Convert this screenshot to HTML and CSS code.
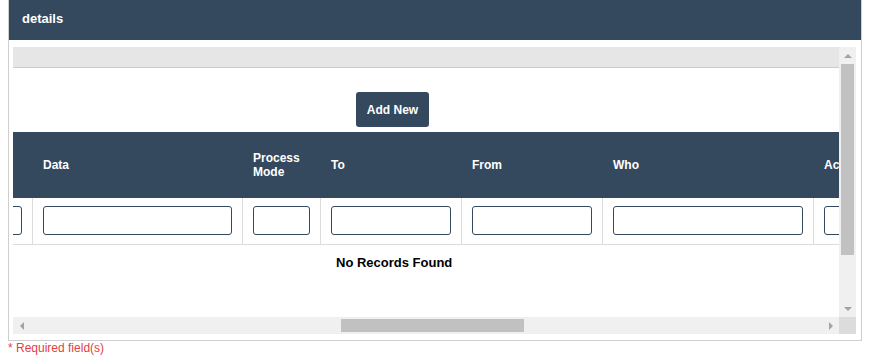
FILE: index.html
```html
<!DOCTYPE html>
<html lang="en">
<head>
    <meta charset="UTF-8">
    <title>details</title>
    <link rel="stylesheet" href="styles.css">
</head>
<body>

    <div class="panel">
        <div class="panel-head">details</div>
        <div class="panel-body">
            <div class="scroll-box">
                <div class="viewport">
                    <div class="toolbar"></div>
                    <div class="actions">
                        <button class="btn">Add New</button>
                    </div>
                    <table class="grid">
                        <colgroup>
                            <col class="c-first">
                            <col class="c-data">
                            <col class="c-mode">
                            <col class="c-to">
                            <col class="c-from">
                            <col class="c-who">
                            <col class="c-action">
                        </colgroup>
                        <thead>
                            <tr>
                                <th></th>
                                <th>Data</th>
                                <th>Process Mode</th>
                                <th>To</th>
                                <th>From</th>
                                <th>Who</th>
                                <th>Action</th>
                            </tr>
                        </thead>
                        <tbody>
                            <tr class="filters">
                                <td><input type="text"></td>
                                <td><input type="text"></td>
                                <td><input type="text"></td>
                                <td><input type="text"></td>
                                <td><input type="text"></td>
                                <td><input type="text"></td>
                                <td><input type="text"></td>
                            </tr>
                        </tbody>
                    </table>
                    <div class="empty">No Records Found</div>
                </div>
                <!-- fake scrollbars -->
                <div class="vbar">
                    <span class="btn-arrow"><i class="arrow up"></i></span>
                    <span class="vthumb"></span>
                    <span class="btn-arrow"><i class="arrow down"></i></span>
                </div>
                <div class="hbar">
                    <span class="btn-arrow"><i class="arrow left"></i></span>
                    <span class="hthumb"></span>
                    <span class="btn-arrow"><i class="arrow right"></i></span>
                </div>
                <div class="corner"></div>
            </div>
        </div>
    </div>

    <p class="required">* Required field(s)</p>

</body>
</html>
```

FILE: styles.css
```css
body {
    margin: 0;
    padding: 0;
    font-family: "Liberation Sans", Arial, sans-serif;
    background: #fff;
}

.panel {
    box-sizing: border-box;
    width: 854px;
    margin-left: 8px;
    border: 1px solid #cfcfcf;
    border-top: none;
}

.panel-head {
    background-color: #34495e;
    color: #fff;
    font-weight: bold;
    font-size: 13px;
    height: 40px;
    line-height: 38px;
    padding-left: 13px;
}

.panel-body {
    padding: 7px 4px 6px 4px;
}

.scroll-box {
    display: grid;
    grid-template-columns: 826px 17px;
    grid-template-rows: 270px 17px;
}

.viewport {
    overflow: hidden;
    background: #fff;
}

.toolbar {
    height: 20px;
    background-color: #e6e6e6;
    border-bottom: 1px solid #cccccc;
}

.actions {
    padding: 24px 0 5px 343px;
}

.btn {
    display: block;
    width: 73px;
    height: 35px;
    padding: 0;
    border: none;
    border-radius: 3px;
    background-color: #34495e;
    color: #fff;
    font-family: inherit;
    font-weight: bold;
    font-size: 12px;
}

.grid {
    table-layout: fixed;
    border-collapse: separate;
    border-spacing: 0;
    width: 1021px;
    margin-left: -100px;
}

.c-first { width: 120px; }
.c-data { width: 210px; }
.c-mode { width: 78px; }
.c-to { width: 141px; }
.c-from { width: 141px; }
.c-who { width: 211px; }
.c-action { width: 120px; }

.grid th {
    height: 66px;
    padding: 0 10px;
    background-color: #34495e;
    color: #fff;
    font-size: 12px;
    line-height: 14px;
    text-align: left;
    vertical-align: middle;
    border-right: 1px solid #34495e;
}

.grid td {
    padding: 8px 10px 9px 10px;
    border-right: 1px solid #dcdcdc;
    border-bottom: 1px solid #dcdcdc;
}

.grid input {
    display: block;
    box-sizing: border-box;
    width: 100%;
    height: 29px;
    margin: 0;
    border: 1px solid #34495e;
    border-radius: 3px;
    background: #fff;
}

.empty {
    padding: 10px 0 0 323px;
    font-size: 13px;
    line-height: 16px;
    font-weight: bold;
    color: #000;
}

/* scrollbars */
.vbar,
.hbar {
    display: flex;
    background-color: #f0f0f0;
}

.vbar {
    flex-direction: column;
}

.btn-arrow {
    display: flex;
    align-items: center;
    justify-content: center;
    width: 17px;
    height: 17px;
    flex: none;
}

.vthumb {
    height: 191px;
    margin: 0 2px;
    background-color: #c1c1c1;
}

.vbar .vthumb + .btn-arrow {
    margin-top: auto;
}

.hthumb {
    width: 183px;
    margin: 2px 0 2px 311px;
    background-color: #c1c1c1;
}

.hbar .hthumb + .btn-arrow {
    margin-left: auto;
}

.corner {
    background-color: #dcdcdc;
}

.arrow {
    width: 0;
    height: 0;
    border: 4px solid transparent;
}

.arrow.up {
    border-top: none;
    border-bottom-color: #a3a3a3;
}

.arrow.down {
    border-bottom: none;
    border-top-color: #a3a3a3;
}

.arrow.left {
    border-left: none;
    border-right-color: #a3a3a3;
}

.arrow.right {
    border-right: none;
    border-left-color: #a3a3a3;
}

.required {
    margin: 0;
    padding-left: 8px;
    font-size: 12px;
    line-height: 14px;
    color: #e2413f;
}
```
